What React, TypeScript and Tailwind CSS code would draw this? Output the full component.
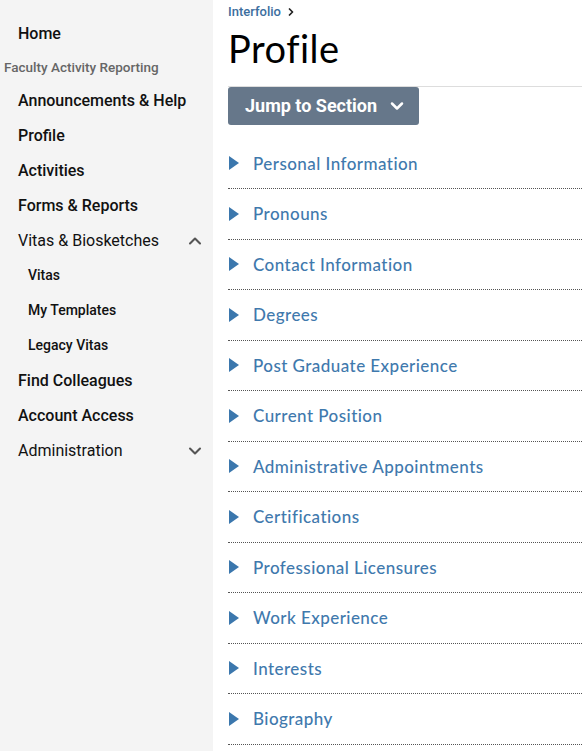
import { ChevronDown, ChevronUp, ChevronRight } from "lucide-react";

const sections = [
  "Personal Information",
  "Pronouns",
  "Contact Information",
  "Degrees",
  "Post Graduate Experience",
  "Current Position",
  "Administrative Appointments",
  "Certifications",
  "Professional Licensures",
  "Work Experience",
  "Interests",
  "Biography",
];

const roboto = { fontFamily: "Roboto, 'Liberation Sans', sans-serif" };

function NavItem({ label, bold = true, chevron }: { label: string; bold?: boolean; chevron?: "up" | "down" }) {
  return (
    <div className="flex h-[35px] items-center justify-between pl-[18px] pr-[8px]">
      <span className={`text-[16px] text-[#111] ${bold ? "font-medium" : "font-normal"}`}>{label}</span>
      {chevron === "up" && <ChevronUp size={20} strokeWidth={2.5} className="text-[#555]" />}
      {chevron === "down" && <ChevronDown size={20} strokeWidth={2.5} className="text-[#555]" />}
    </div>
  );
}

function SubItem({ label }: { label: string }) {
  return (
    <div className="flex h-[35px] items-center pl-[28px]">
      <span className="text-[14px] font-medium text-[#111]">{label}</span>
    </div>
  );
}

export default function App() {
  return (
    <div className="flex h-screen overflow-hidden bg-white">
      {/* SIDEBAR */}
      <aside className="w-[213px] shrink-0 bg-[#f4f4f4] pt-[16px]" style={roboto}>
        <NavItem label="Home" />
        <div className="flex h-[32px] items-center pl-[4px]">
          <span className="text-[13.5px] font-medium text-[#666]">Faculty Activity Reporting</span>
        </div>
        <NavItem label="Announcements & Help" />
        <NavItem label="Profile" />
        <NavItem label="Activities" />
        <NavItem label="Forms & Reports" />
        <NavItem label="Vitas & Biosketches" bold={false} chevron="up" />
        <SubItem label="Vitas" />
        <SubItem label="My Templates" />
        <SubItem label="Legacy Vitas" />
        <NavItem label="Find Colleagues" />
        <NavItem label="Account Access" />
        <NavItem label="Administration" bold={false} chevron="down" />
      </aside>

      {/* MAIN */}
      <main className="flex-1 pl-[15px]">
        <div className="flex items-center gap-[4px] pt-[2px] text-[13px] font-medium text-[#3c6e9e]" style={roboto}>
          <span>Interfolio</span>
          <ChevronRight size={12} strokeWidth={3.5} className="text-[#222]" />
        </div>
        <h1
          className="mt-[4px] text-[38px] font-normal leading-[44px] tracking-[0.5px] text-black"
          style={{ fontFamily: "Lato, 'Open Sans', sans-serif" }}
        >
          Profile
        </h1>
        <div className="mt-[16px] border-t border-[#dddddd]">
          <button
            className="flex h-[38px] w-[191px] items-center gap-[10px] rounded-[3px] bg-[#66778a] pl-[17px] text-[18px] font-bold text-white"
            style={roboto}
          >
            Jump to Section
            <ChevronDown size={20} strokeWidth={3} />
          </button>
        </div>

        <div className="mt-[14px]" style={{ fontFamily: "Lato, 'Open Sans', sans-serif" }}>
          {sections.map((s) => (
            <div key={s} className="flex h-[50.5px] items-center border-b border-dotted border-[#555]">
              <svg width="10" height="14" viewBox="0 0 10 14" className="ml-[1px] mr-[14px]">
                <path d="M0 0L10 7L0 14Z" fill="#3b77ad" />
              </svg>
              <span className="text-[17px] font-medium tracking-[0.45px] text-[#3f79ad]">{s}</span>
            </div>
          ))}
        </div>
      </main>
    </div>
  );
}
